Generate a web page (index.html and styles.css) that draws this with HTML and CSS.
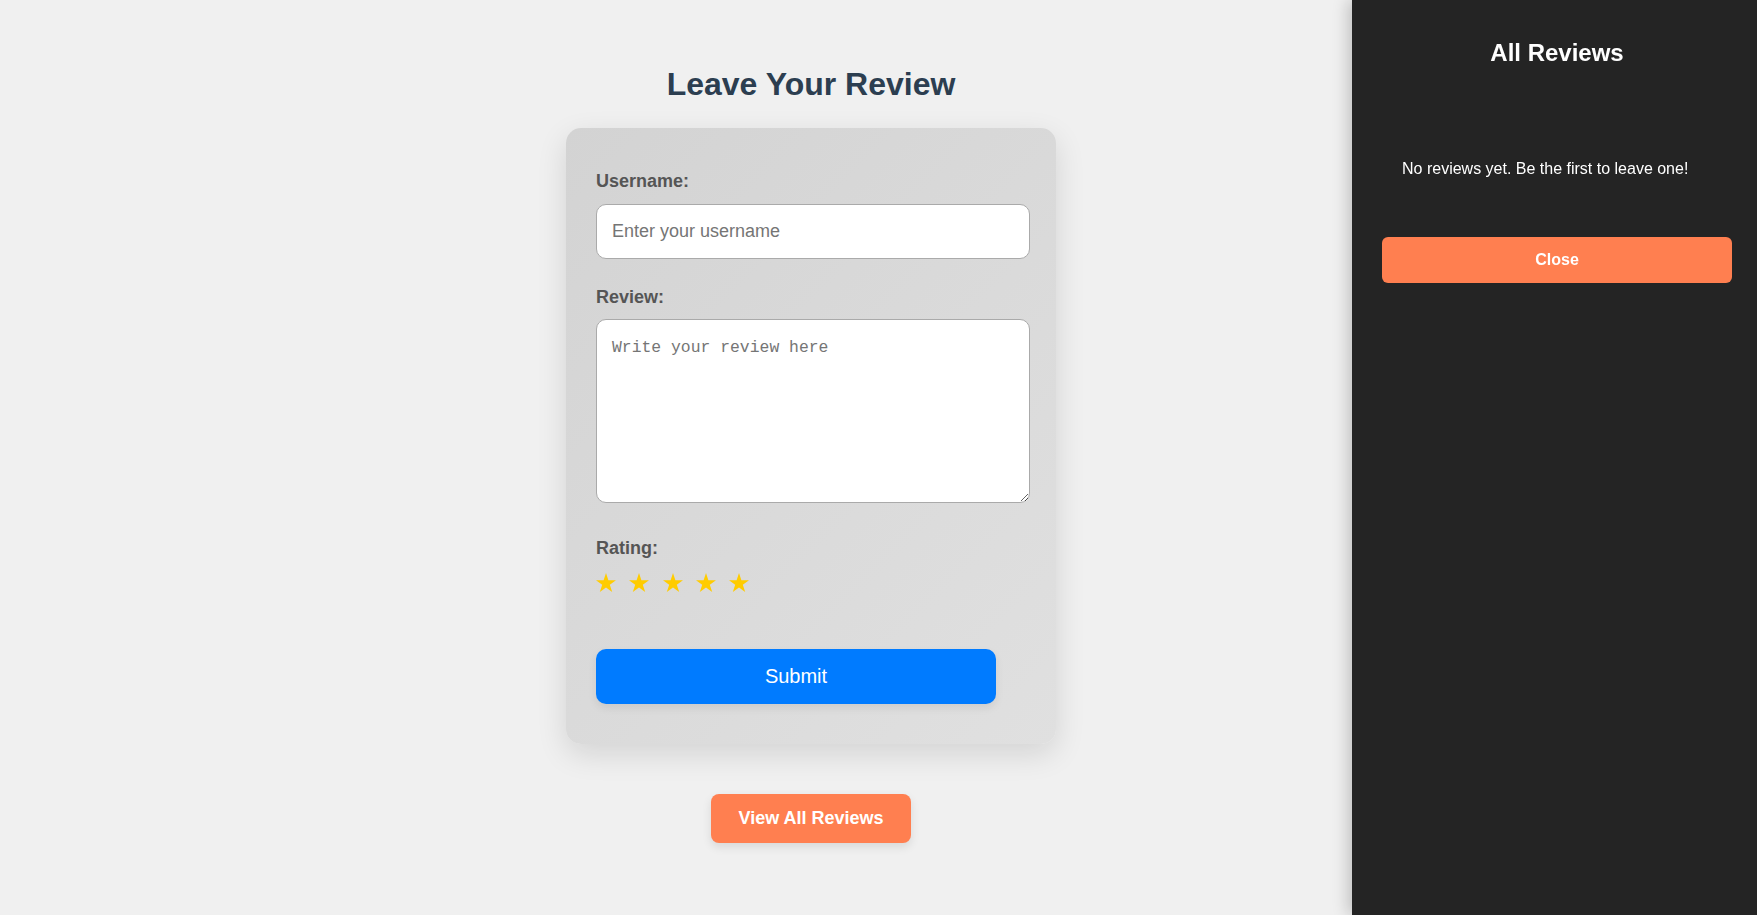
FILE: index.html
```html
<!DOCTYPE html>
<html lang="en">
<head>
<meta charset="utf-8">
<title>Leave Your Review</title>
<link rel="stylesheet" href="styles.css">
</head>
<body>
<main class="main">
  <h1 class="page-title">Leave Your Review</h1>
  <form class="card">
    <label class="label" for="username">Username:</label>
    <input class="field" id="username" type="text" placeholder="Enter your username">
    <label class="label label-gap" for="review">Review:</label>
    <textarea class="area" id="review" placeholder="Write your review here"></textarea>
    <label class="label label-gap-lg">Rating:</label>
    <div class="stars">
      <svg class="star" viewBox="0 0 20 19"><polygon points="10,0 12.4,7.2 20,7.2 13.8,11.7 16.2,19 10,14.5 3.8,19 6.2,11.7 0,7.2 7.6,7.2"/></svg>
      <svg class="star" viewBox="0 0 20 19"><polygon points="10,0 12.4,7.2 20,7.2 13.8,11.7 16.2,19 10,14.5 3.8,19 6.2,11.7 0,7.2 7.6,7.2"/></svg>
      <svg class="star" viewBox="0 0 20 19"><polygon points="10,0 12.4,7.2 20,7.2 13.8,11.7 16.2,19 10,14.5 3.8,19 6.2,11.7 0,7.2 7.6,7.2"/></svg>
      <svg class="star" viewBox="0 0 20 19"><polygon points="10,0 12.4,7.2 20,7.2 13.8,11.7 16.2,19 10,14.5 3.8,19 6.2,11.7 0,7.2 7.6,7.2"/></svg>
      <svg class="star" viewBox="0 0 20 19"><polygon points="10,0 12.4,7.2 20,7.2 13.8,11.7 16.2,19 10,14.5 3.8,19 6.2,11.7 0,7.2 7.6,7.2"/></svg>
    </div>
    <button class="submit" type="button">Submit</button>
  </form>
  <button class="view-all" type="button">View All Reviews</button>
</main>
<aside class="sidebar">
  <h2 class="side-title">All Reviews</h2>
  <p class="empty">No reviews yet. Be the first to leave one!</p>
  <button class="close" type="button">Close</button>
</aside>
</body>
</html>
```

FILE: styles.css
```css
html, body {
  margin: 0;
  padding: 0;
  height: 100%;
}
body {
  background: #f0f0f0;
  font-family: "Liberation Sans", Arial, sans-serif;
  overflow: hidden;
}
.main {
  display: flex;
  flex-direction: column;
  align-items: center;
  padding: 66px 135px 0 0;
}
.page-title {
  margin: 0 0 25px;
  font-size: 32px;
  line-height: 37px;
  font-weight: bold;
  color: #2c3e50;
}
.card {
  box-sizing: border-box;
  width: 490px;
  padding: 43px 26px 40px 30px;
  border-radius: 15px;
  background: linear-gradient(135deg, #d3d3d3, #e0e0e0);
  box-shadow: 0 10px 30px rgba(0, 0, 0, 0.12);
  display: flex;
  flex-direction: column;
}
.label {
  display: block;
  font-size: 18px;
  line-height: 21px;
  font-weight: bold;
  color: #555;
  margin-bottom: 12px;
}
.label-gap {
  margin-top: 28px;
  margin-bottom: 11px;
}
.label-gap-lg {
  margin-top: 35px;
  margin-bottom: 0;
}
.field {
  display: block;
  box-sizing: border-box;
  width: 100%;
  height: 55px;
  margin: 0;
  padding: 0 15px;
  border: 1px solid #aaa;
  border-radius: 10px;
  background: #fff;
  font-family: "Liberation Sans", Arial, sans-serif;
  font-size: 18px;
  color: #333;
}
.field::placeholder {
  color: #757575;
}
.area {
  display: block;
  box-sizing: border-box;
  width: 100%;
  height: 184px;
  margin: 0;
  padding: 15px;
  border: 1px solid #aaa;
  border-radius: 10px;
  background: #fff;
  font-family: "Liberation Mono", "DejaVu Sans Mono", monospace;
  font-size: 16.4px;
  line-height: 26px;
  color: #333;
}
.area::placeholder {
  color: #757575;
}
.stars {
  display: flex;
  gap: 13.3px;
  margin-top: 14px;
}
.star {
  width: 20px;
  height: 19px;
  fill: #ffcc00;
}
.submit {
  box-sizing: border-box;
  width: 400px;
  height: 55px;
  margin-top: 57px;
  border: none;
  border-radius: 10px;
  background: #007bff;
  color: #fff;
  font-family: "Liberation Sans", Arial, sans-serif;
  font-size: 20px;
  box-shadow: 0 4px 8px rgba(0, 0, 0, 0.08);
  cursor: pointer;
}
.view-all {
  box-sizing: border-box;
  height: 49px;
  margin-top: 50px;
  padding: 0 27px;
  border: none;
  border-radius: 8px;
  background: #ff7f50;
  color: #fff;
  font-family: "Liberation Sans", Arial, sans-serif;
  font-size: 18px;
  font-weight: bold;
  box-shadow: 0 4px 10px rgba(0, 0, 0, 0.1);
  cursor: pointer;
}
.sidebar {
  position: fixed;
  top: 0;
  right: 0;
  box-sizing: border-box;
  width: 405px;
  height: 100%;
  padding: 39px 25px 0 30px;
  background: #242424;
  color: #fff;
  box-shadow: -4px 0 15px rgba(0, 0, 0, 0.2);
  display: flex;
  flex-direction: column;
}
.side-title {
  margin: 0 0 93px;
  font-size: 24px;
  line-height: 28px;
  font-weight: bold;
  text-align: center;
}
.empty {
  margin: 0;
  padding: 0 20px;
  font-size: 16px;
  line-height: 18px;
}
.close {
  box-sizing: border-box;
  width: 350px;
  height: 46px;
  margin-top: 59px;
  border: none;
  border-radius: 6px;
  background: #ff7f50;
  color: #fff;
  font-family: "Liberation Sans", Arial, sans-serif;
  font-size: 16px;
  font-weight: bold;
  cursor: pointer;
}
```
